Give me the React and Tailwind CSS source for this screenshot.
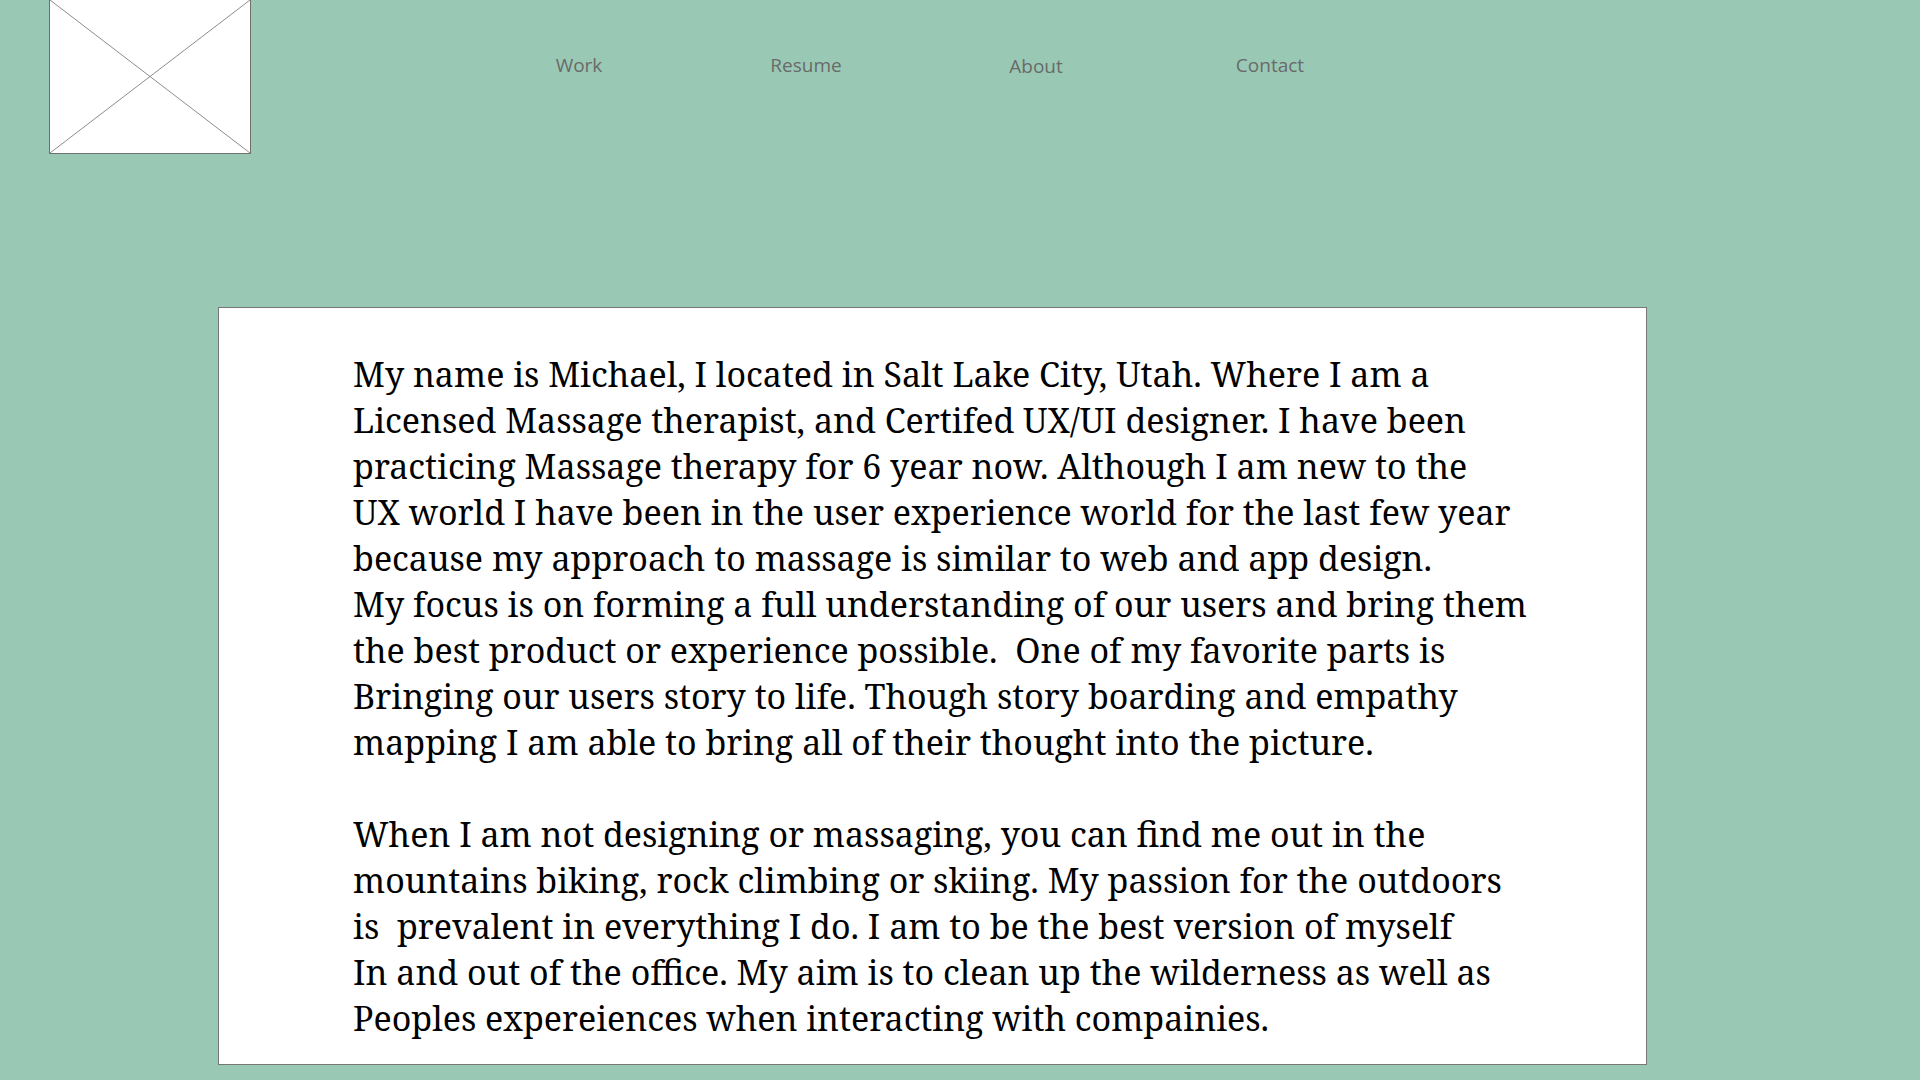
import React from "react";

const para1 = [
  "My name is Michael, I located in Salt Lake City, Utah. Where I am a",
  "Licensed Massage therapist, and Certifed UX/UI designer. I have been",
  "practicing Massage therapy for 6 year now. Although I am new to the",
  "UX world I have been in the user experience world for the last few year",
  "because my approach to massage is similar to web and app design.",
  "My focus is on forming a full understanding of our users and bring them",
  "the best product or experience possible.\u00a0 One of my favorite parts is",
  "Bringing our users story to life. Though story boarding and empathy",
  "mapping I am able to bring all of their thought into the picture.",
];
const para2 = [
  "When I am not designing or massaging, you can find me out in the",
  "mountains biking, rock climbing or skiing. My passion for the outdoors",
  "is\u00a0 prevalent in everything I do. I am to be the best version of myself",
  "In and out of the office. My aim is to clean up the wilderness as well as",
  "Peoples expereiences when interacting with compainies.",
];

export default function App() {
  return (
    <div className="min-h-screen w-full bg-[#99c9b5] overflow-hidden">
      <header className="flex items-start">
        <div className="ml-[49px] w-[202px] h-[154px] bg-white border border-[#6f6f6f] border-t-0 relative">
          <svg className="absolute inset-0 w-full h-full" viewBox="0 0 200 153" preserveAspectRatio="none">
            <line x1="0" y1="0" x2="200" y2="153" stroke="#8c8c8c" strokeWidth="1" />
            <line x1="200" y1="0" x2="0" y2="153" stroke="#8c8c8c" strokeWidth="1" />
          </svg>
        </div>
        <nav className="flex items-center mt-[50px] text-[19px] text-[#6a6a6a] font-['Open_Sans',sans-serif]">
          <a className="w-[120px] text-center ml-[268px]">Work</a>
          <a className="w-[120px] text-center ml-[107px]">Resume</a>
          <a className="w-[120px] text-center ml-[110px] mt-[2px]">About</a>
          <a className="w-[120px] text-center ml-[114px]">Contact</a>
        </nav>
      </header>
      <main className="mt-[153px] ml-[218px] w-[1429px] h-[758px] bg-white border border-[#777777] pl-[134px] pt-[43px] text-black font-['Noto_Serif','DejaVu_Serif',serif] text-[34px] leading-[46px]">
        {para1.map((l, i) => (
          <div key={i} className="whitespace-pre">{l}</div>
        ))}
        <div className="h-[46px]" />
        {para2.map((l, i) => (
          <div key={i} className="whitespace-pre">{l}</div>
        ))}
      </main>
    </div>
  );
}
